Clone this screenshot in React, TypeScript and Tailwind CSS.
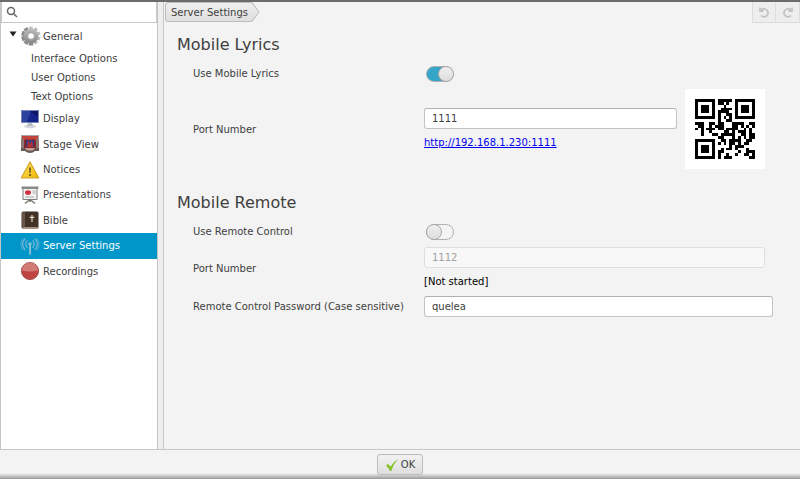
import { useState, type ReactNode } from "react";

const QR_SIZE = 21;
const ALPHANUMERIC = "0123456789ABCDEFGHIJKLMNOPQRSTUVWXYZ $%*+-./:";

function gfMul(a: number, b: number) {
  let r = 0;
  for (let i = 7; i >= 0; i--) {
    r = (r << 1) ^ ((r >> 7) * 0x11d);
    r ^= ((b >> i) & 1) * a;
  }
  return r;
}

// Version 1, level L, alphanumeric: 19 data codewords and 7 error correction codewords
function qrMatrix(value: string) {
  const text = value.toUpperCase();
  const bits: number[] = [];
  const push = (n: number, len: number) => {
    for (let i = len - 1; i >= 0; i--) bits.push((n >> i) & 1);
  };
  push(2, 4);
  push(text.length, 9);
  for (let i = 0; i < text.length; i += 2) {
    const a = ALPHANUMERIC.indexOf(text[i]);
    if (i + 1 < text.length) push(a * 45 + ALPHANUMERIC.indexOf(text[i + 1]), 11);
    else push(a, 6);
  }
  push(0, Math.min(4, 152 - bits.length));
  while (bits.length % 8) bits.push(0);
  for (let pad = 0xec; bits.length < 152; pad ^= 0xec ^ 0x11) push(pad, 8);

  const gen = new Array(7).fill(0);
  gen[6] = 1;
  for (let i = 0, root = 1; i < 7; i++, root = gfMul(root, 2)) {
    for (let j = 0; j < 7; j++) gen[j] = gfMul(gen[j], root) ^ (gen[j + 1] ?? 0);
  }
  const rem = new Array(7).fill(0);
  for (let i = 0; i < 19; i++) {
    const byte = parseInt(bits.slice(i * 8, i * 8 + 8).join(""), 2);
    const factor = byte ^ rem.shift();
    rem.push(0);
    gen.forEach((g, j) => (rem[j] ^= gfMul(g, factor)));
  }
  rem.forEach((b) => push(b, 8));

  const grid: number[][] = Array.from({ length: QR_SIZE }, () => new Array(QR_SIZE).fill(-1));
  const set = (x: number, y: number, v: boolean | number) => {
    if (x >= 0 && y >= 0 && x < QR_SIZE && y < QR_SIZE) grid[y][x] = Number(v);
  };
  for (let i = 0; i < QR_SIZE; i++) {
    set(6, i, i % 2 === 0);
    set(i, 6, i % 2 === 0);
  }
  for (const [cx, cy] of [[3, 3], [17, 3], [3, 17]]) {
    for (let dy = -4; dy <= 4; dy++) {
      for (let dx = -4; dx <= 4; dx++) {
        const d = Math.max(Math.abs(dx), Math.abs(dy));
        set(cx + dx, cy + dy, d !== 2 && d !== 4);
      }
    }
  }

  // format bits for level L, mask 1 (every other row inverted)
  const data = 9;
  let bch = data;
  for (let i = 0; i < 10; i++) bch = (bch << 1) ^ ((bch >> 9) * 0x537);
  const format = ((data << 10) | bch) ^ 0x5412;
  const bit = (i: number) => (format >> i) & 1;
  for (let i = 0; i < 6; i++) set(8, i, bit(i));
  set(8, 7, bit(6));
  set(8, 8, bit(7));
  set(7, 8, bit(8));
  for (let i = 9; i < 15; i++) set(14 - i, 8, bit(i));
  for (let i = 0; i < 8; i++) set(QR_SIZE - 1 - i, 8, bit(i));
  for (let i = 8; i < 15; i++) set(8, QR_SIZE - 15 + i, bit(i));
  set(8, QR_SIZE - 8, 1);

  let n = 0;
  let up = true;
  for (let right = QR_SIZE - 1; right > 0; right -= 2) {
    if (right === 6) right = 5;
    for (let v = 0; v < QR_SIZE; v++) {
      const y = up ? QR_SIZE - 1 - v : v;
      for (const x of [right, right - 1]) {
        if (grid[y][x] !== -1) continue;
        grid[y][x] = (bits[n++] ?? 0) ^ (y % 2 === 0 ? 1 : 0);
      }
    }
    up = !up;
  }
  return grid;
}

function QrCode({ text }: { text: string }) {
  const path = qrMatrix(text)
    .flatMap((row, y) => row.map((on, x) => (on ? `M${x} ${y}h1v1h-1z` : "")))
    .join("");
  return (
    <svg viewBox="-3.5 -3.5 28 28" className="size-20 shrink-0 bg-white" role="img" aria-label={text}>
      <path d={path} fill="#000" shapeRendering="crispEdges" />
    </svg>
  );
}

function GearIcon() {
  return (
    <svg viewBox="0 0 20 20" className="size-5">
      <defs>
        <linearGradient id="gear" x1="0" y1="0" x2="0" y2="1">
          <stop offset="0" stopColor="#c0c0c0" />
          <stop offset="1" stopColor="#858585" />
        </linearGradient>
      </defs>
      <g fill="url(#gear)">
        {[0, 36, 72, 108, 144].map((a) => (
          <path key={a} d="M8.4 0.4h3.2l.7 19.2H7.7z" transform={`rotate(${a} 10 10)`} />
        ))}
        <circle cx="10" cy="10" r="7.4" />
      </g>
      <circle cx="10" cy="10" r="4.4" fill="#a4a4a4" />
      <circle cx="10" cy="10" r="2.8" fill="#fff" />
    </svg>
  );
}

function DisplayIcon() {
  return (
    <svg viewBox="0 0 20 20" className="size-5">
      <ellipse cx="10" cy="17.4" rx="6" ry="1.8" fill="#d5d8dc" />
      <path d="M8 14h4l1 3H7z" fill="#b9bdc4" />
      <path d="M1 1h18v13H1z" fill="#7a86b8" />
      <path d="M2 2h16v11H2z" fill="#14248c" />
      <path d="M2 2h9L7 13H2z" fill="#2c429f" />
      <path d="M10 2h8v6z" fill="#0c1765" />
    </svg>
  );
}

function StageIcon() {
  return (
    <svg viewBox="0 0 20 20" className="size-5">
      <path d="M1 1h18v5H1z" fill="#a9a3a2" />
      <path d="M2 5h16v10H2z" fill="#85252a" />
      <path d="M6 6h8v7H6z" fill="#373981" />
      <path d="M8 6l2 4 2-4 1 7H7z" fill="#ae3439" />
      <path d="M2 2h16v3l-3 1-2-1-3 1-3-1-2 1-3-1z" fill="#c2443c" />
      <path d="M1 5h3v10H1zM16 5h3v10h-3z" fill="#8b7974" />
      <path d="M1 14h18v3h-4q-2 2-5 2t-5-2H1z" fill="#655a58" />
      <path d="M5 14h10l-1.5 2q-3.500 1.500-7 0z" fill="#c99f8f" />
    </svg>
  );
}

function NoticeIcon() {
  return (
    <svg viewBox="0 0 20 20" className="size-5">
      <defs>
        <linearGradient id="warn" x1="0" y1="0" x2="1" y2="1">
          <stop offset="0" stopColor="#ffe873" />
          <stop offset="1" stopColor="#eeb400" />
        </linearGradient>
      </defs>
      <path d="M10 2 18.6 17.8H1.4z" fill="url(#warn)" stroke="#d5a420" strokeWidth="1.2" strokeLinejoin="round" />
      <path d="M9.2 7.5h1.6l-.3 5.5h-1z" fill="#4f4210" />
      <circle cx="10" cy="15" r="1" fill="#4f4210" />
    </svg>
  );
}

function PresentationIcon() {
  return (
    <svg viewBox="0 0 20 20" className="size-5">
      <path d="M10 14v3M10 14.5l-5 4M10 14.5l5 4" stroke="#77776f" strokeWidth="1.5" fill="none" />
      <path d="M3 3h14v11.5H3z" fill="#f2f2f2" stroke="#7e7e7a" />
      <path d="M1.5 1.5h17v2.5h-17z" fill="#8b8b86" />
      <ellipse cx="8" cy="7.6" rx="3" ry="2.4" fill="#cf3040" />
      <path d="M12.5 6h3M12.5 8h3M5 12h9" stroke="#aaa" />
    </svg>
  );
}

function BibleIcon() {
  return (
    <svg viewBox="0 0 20 20" className="size-5">
      <rect x="1.5" y="1.5" width="17" height="17" rx="1.5" fill="#413127" />
      <path d="M2 2h3v16H2z" fill="#695445" />
      <path d="M3 17h15.5v1.5H3z" fill="#a2907a" />
      <path d="M12 5v7M9.7 7.3h4.6" stroke="#e5d9c3" strokeWidth="1.2" />
    </svg>
  );
}

function AntennaIcon() {
  return (
    <svg viewBox="0 0 20 20" className="size-5" fill="none" stroke="#78b9d6" strokeWidth="1.2" strokeLinecap="round">
      <path d="M10 8v10" strokeWidth="1.6" stroke="#a5c6d4" />
      <circle cx="10" cy="8" r="1.2" fill="#b9d2dd" />
      <path d="M7.2 4.8a4.5 4.5 0 0 0 0 6.6M12.8 4.8a4.5 4.5 0 0 1 0 6.6" />
      <path d="M4.8 3a7.5 7.5 0 0 0 0 10.5M15.2 3a7.5 7.5 0 0 1 0 10.5" />
      <path d="M2.8 3a10 10 0 0 0 0 11M17.2 3a10 10 0 0 1 0 11" stroke="#4aa6cf" />
    </svg>
  );
}

function RecordIcon() {
  return (
    <svg viewBox="0 0 20 20" className="size-5">
      <circle cx="10" cy="10" r="8.6" fill="#c04440" stroke="#a35a58" />
      <path d="M2 9.5a8 8 0 0 1 16 0q-8 2-16 0z" fill="#d37b76" />
    </svg>
  );
}

const SUB_ITEMS = ["Interface Options", "User Options", "Text Options"];

const ITEMS: { label: string; icon: ReactNode }[] = [
  { label: "Display", icon: <DisplayIcon /> },
  { label: "Stage View", icon: <StageIcon /> },
  { label: "Notices", icon: <NoticeIcon /> },
  { label: "Presentations", icon: <PresentationIcon /> },
  { label: "Bible", icon: <BibleIcon /> },
  { label: "Server Settings", icon: <AntennaIcon /> },
  { label: "Recordings", icon: <RecordIcon /> },
];

function Sidebar() {
  const [selected, setSelected] = useState("Server Settings");
  return (
    <aside className="w-[158px] shrink-0 border-x border-[#c4c4c4] bg-white">
      <div className="flex h-[21px] items-center border border-t-0 border-[#c8c8c8] pl-1">
        <svg viewBox="0 0 12 12" className="size-3 shrink-0" fill="none" stroke="#666" strokeWidth="1.5">
          <circle cx="5" cy="5" r="3.5" />
          <path d="m7.7 7.7 3.3 3.3" />
        </svg>
        <input type="search" aria-label="Search" className="h-full w-full min-w-0 px-1 outline-none" />
      </div>
      <nav>
        <button className="flex h-[26px] w-full items-center pl-2">
          <svg viewBox="0 0 8 6" className="mr-1 mb-1 h-[6px] w-2">
            <path d="M0.5 0.5h7L4 5.5z" fill="#222" />
          </svg>
          <GearIcon />
          <span className="pl-[2px]">General</span>
        </button>
        {SUB_ITEMS.map((label) => (
          <button key={label} className="flex h-[19px] w-full items-center pl-[30px]">
            {label}
          </button>
        ))}
        <div className="grid h-[178px] grid-rows-7">
          {ITEMS.map(({ label, icon }) => (
            <button
              key={label}
              onClick={() => setSelected(label)}
              className={
                selected === label
                  ? "flex items-center gap-[3px] bg-[#0096c9] pl-[19px] text-white"
                  : "flex items-center gap-[3px] pl-[19px]"
              }
            >
              {icon}
              {label}
            </button>
          ))}
        </div>
      </nav>
    </aside>
  );
}

function Toggle({ id, defaultChecked }: { id: string; defaultChecked?: boolean }) {
  return (
    <span className="relative ml-[2px] block h-4 w-7">
      <input
        id={id}
        type="checkbox"
        role="switch"
        defaultChecked={defaultChecked}
        className="peer block h-4 w-7 appearance-none rounded-full border border-[#b0b0b0] bg-[#f4f4f4] checked:bg-[#35a5c8]"
      />
      <span className="pointer-events-none absolute top-0 left-0 size-4 rounded-full border border-[#aaa] bg-linear-to-b from-[#f0f0f0] to-[#dcdcdc] peer-checked:left-3" />
    </span>
  );
}

const inputClass =
  "block h-[21px] w-full rounded-[3px] border border-[#c2c2c2] border-t-[#b0b0b0] bg-white px-[7px] outline-none disabled:border-[#dedede] disabled:bg-[#f8f8f8] disabled:text-[#a0a0a0]";

const rowClass = "grid grid-cols-[231px_1fr] items-center";

export default function App() {
  const url = "http://192.168.1.230:1111";
  return (
    <div className="flex h-screen flex-col border-t-2 border-[#6d696d] bg-[#f3f3f3] font-['DejaVu_Sans',sans-serif] text-[10px] leading-[17px] text-[#404040]">
      <div className="flex min-h-0 flex-1">
        <Sidebar />
        <div className="w-[6px] shrink-0 border-r border-[#c8c8c8] bg-[#eee]" />
        <main className="min-w-0 flex-1">
          <div className="flex h-[21px] items-stretch justify-between pl-px">
            <button className="relative h-5 pr-3 pl-[6px]">
              <svg viewBox="0 0 94 20" preserveAspectRatio="none" className="absolute inset-0 size-full">
                <defs>
                  <linearGradient id="crumb" x1="0" y1="0" x2="0" y2="1">
                    <stop offset="0" stopColor="#f0f0f0" />
                    <stop offset="1" stopColor="#dedede" />
                  </linearGradient>
                </defs>
                <path
                  d="M3.5.5h81q2 0 3 2l5.5 7.5-5.5 7.5q-1 2-3 2h-81q-3 0-3-3v-13q0-3 3-3z"
                  fill="url(#crumb)"
                  stroke="#bdbdbd"
                />
              </svg>
              <span className="relative">Server Settings</span>
            </button>
            <div className="flex text-[#c4c4c4]">
              <button disabled aria-label="Undo" className="flex w-6 items-center justify-center border border-t-0 border-[#dcdcdc] bg-[#ededed]">
                <svg viewBox="0 0 12 12" className="size-3" fill="none" stroke="currentColor" strokeWidth="1.8">
                  <path d="M2 1.5v3.5h3.5M2.5 5a4 4 0 1 1 .5 4.5" />
                </svg>
              </button>
              <button disabled aria-label="Redo" className="flex w-6 items-center justify-center border border-t-0 border-l-0 border-[#dcdcdc] bg-[#ededed]">
                <svg viewBox="0 0 12 12" className="size-3" fill="none" stroke="currentColor" strokeWidth="1.8">
                  <path d="M10 1.5v3.5H6.5M9.5 5a4 4 0 1 0-.5 4.5" />
                </svg>
              </button>
            </div>
          </div>

          <div className="pr-[27px] pl-[29px]">
            <h2 className="-ml-4 pt-2 text-[16px] leading-7">Mobile Lyrics</h2>
            <div className={`${rowClass} mt-[6px]`}>
              <label htmlFor="lyrics">Use Mobile Lyrics</label>
              <Toggle id="lyrics" defaultChecked />
            </div>
            <div className={`${rowClass} mt-[7px]`}>
              <label htmlFor="lyrics-port">Port Number</label>
              <div className="flex items-center gap-2 pr-2">
                <div className="min-w-0 flex-1">
                  <input id="lyrics-port" defaultValue="1111" className={inputClass} />
                  <a href={url} className="mt-[5px] block text-[#0000ee] underline">
                    {url}
                  </a>
                </div>
                <QrCode text={url} />
              </div>
            </div>

            <h2 className="-ml-4 pt-5 text-[16px] leading-7">Mobile Remote</h2>
            <div className={`${rowClass} mt-[6px]`}>
              <label htmlFor="remote">Use Remote Control</label>
              <Toggle id="remote" />
            </div>
            <div className={`${rowClass} mt-[7px]`}>
              <label htmlFor="remote-port">Port Number</label>
              <div className="pr-2">
                <input id="remote-port" defaultValue="1112" disabled className={inputClass} />
                <p className="mt-[5px] text-black">[Not started]</p>
              </div>
            </div>
            <div className={`${rowClass} mt-[6px]`}>
              <label htmlFor="password">Remote Control Password (Case sensitive)</label>
              <input id="password" defaultValue="quelea" className={inputClass} />
            </div>
          </div>
        </main>
      </div>
      <footer className="flex justify-center border-t border-[#c8c8c8] bg-linear-to-b from-[#f3f3f3] from-80% to-[#999] pt-1 pb-1">
        <button className="flex h-[21px] items-center gap-[2px] rounded-[3px] border border-[#bcbcbc] bg-linear-to-b from-[#f2f2f2] to-[#dedede] px-[7px]">
          <svg viewBox="0 0 14 14" className="size-[14px]">
            <path d="m1 7.5 2-1.5 2.5 2.7Q8 4 13 1 8.5 6 6.2 13H5Q3.5 9.8 1 7.5z" fill="#84c225" />
          </svg>
          OK
        </button>
      </footer>
    </div>
  );
}
